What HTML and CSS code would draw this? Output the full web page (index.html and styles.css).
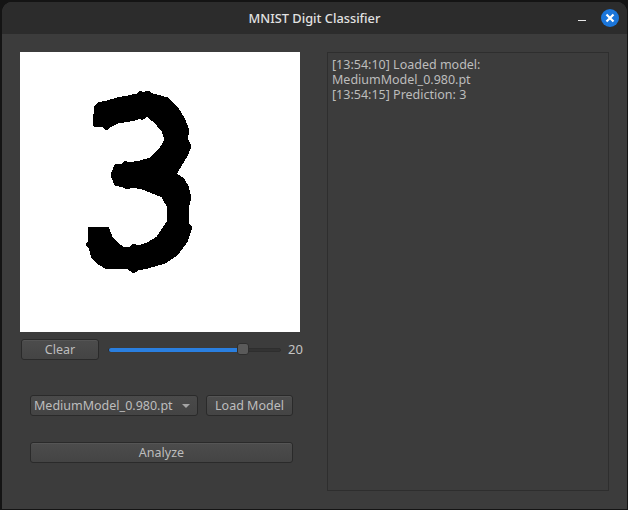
FILE: index.html
```html
<!DOCTYPE html>
<html lang="en">
<head>
    <meta charset="UTF-8">
    <meta name="viewport" content="width=device-width, initial-scale=1.0">
    <title>MNIST Digit Classifier</title>
    <link rel="stylesheet" href="styles.css">
</head>
<body>

    <div class="window">
        <div class="titlebar">
            <span class="title">MNIST Digit Classifier</span>
            <span class="minimize"></span>
            <span class="close">
                <svg width="10" height="10" viewBox="0 0 10 10">
                    <path d="M1.5 1.5 L8.5 8.5 M8.5 1.5 L1.5 8.5" stroke="#fff" stroke-width="2.2" fill="none"/>
                </svg>
            </span>
        </div>

        <div class="content">
            <div class="left">
                <div class="canvas">
                    <!-- hand drawn digit -->
                    <svg width="280" height="280" viewBox="20 52 280 280" shape-rendering="crispEdges">
                        <polygon fill="#000" stroke="#000" stroke-width="1" points="94,107 98,103 107,101 117,98 128,96 137,94 140,91 143,93 148,91 153,94 168,98 178,108 185,120 189,131 187,138 191,146 187,156 178,171 176,174 183,178 188,186 191,198 189,205 188,223 192,227 187,242 177,255 165,263 148,268 138,270 134,273 128,269 105,268 97,263 92,258 89,248 86,244 88,242 88,227 108,227 112,237 120,245 125,248 130,247 134,244 138,246 147,243 157,237 167,222 168,208 162,197 150,192 142,189 133,187 127,189 123,187 115,185 111,175 115,165 122,164 125,161 128,163 140,161 150,158 160,148 165,140 162,131 155,123 147,116 142,120 140,118 135,120 130,121 118,123 110,127 107,130 103,127 94,126 93,116 94,114"/>
                    </svg>
                </div>

                <div class="brush-row">
                    <button class="btn clear-btn">Clear</button>
                    <div class="slider">
                        <div class="slider-fill"></div>
                        <div class="slider-thumb"></div>
                    </div>
                    <span class="brush-size">20</span>
                </div>

                <div class="model-row">
                    <div class="combo">
                        <span>MediumModel_0.980.pt</span>
                        <span class="combo-arrow"></span>
                    </div>
                    <button class="btn load-btn">Load Model</button>
                </div>

                <button class="btn analyze-btn">Analyze</button>
            </div>

            <div class="log">[13:54:10] Loaded model:<br>MediumModel_0.980.pt<br>[13:54:15] Prediction: 3</div>
        </div>
    </div>

</body>
</html>
```

FILE: styles.css
```css
* {
    box-sizing: border-box;
}
body {
    margin: 0;
    height: 510px;
    padding: 2px 1px 1px 2px;
    background: #141414;
    overflow: hidden;
    font-family: "Noto Sans", sans-serif;
    font-size: 12.5px;
    color: #c4c4c4;
}
.window {
    height: 100%;
    display: flex;
    flex-direction: column;
    background: #3c3c3c;
    border-radius: 10px 10px 0 0;
    overflow: hidden;
}
.titlebar {
    position: relative;
    height: 32px;
    flex: none;
    display: flex;
    align-items: center;
    justify-content: center;
    background: #2c2c2c;
}
.title {
    font-size: 12.8px;
    font-weight: 500;
    color: #e2e2e2;
}
.minimize {
    position: absolute;
    left: 576px;
    top: 18px;
    width: 8px;
    height: 1px;
    background: #e8e8e8;
}
.close {
    position: absolute;
    left: 599px;
    top: 7px;
    width: 18px;
    height: 18px;
    border-radius: 50%;
    background: #1b76db;
    display: flex;
    align-items: center;
    justify-content: center;
}
.content {
    flex: 1;
    display: flex;
    padding-top: 18px;
}
.left {
    width: 325px;
    flex: none;
    padding-left: 18px;
}
.canvas {
    width: 280px;
    height: 280px;
    background: #fff;
}
.canvas svg {
    display: block;
}
.btn {
    height: 21px;
    padding: 0 0 1px;
    border: 1px solid #2a2a2a;
    border-radius: 3px;
    background: linear-gradient(#4c4c4c, #444);
    box-shadow: inset 0 1px 0 #555;
    font-family: inherit;
    font-size: 12.5px;
    color: #bdbdbd;
}
.brush-row {
    display: flex;
    align-items: center;
    margin: 7px 0 0 1px;
}
.clear-btn {
    width: 78px;
}
.slider {
    position: relative;
    width: 173px;
    height: 4px;
    margin-left: 9px;
    border: 1px solid #2e2e2e;
    border-radius: 2px;
    background: #333;
}
.slider-fill {
    width: 130px;
    height: 4px;
    margin-top: -1px;
    background: #2a7fe0;
    border-radius: 2px;
}
.slider-thumb {
    position: absolute;
    left: 128px;
    top: -6px;
    width: 12px;
    height: 12px;
    border: 1px solid #2e2e2e;
    border-radius: 3px;
    background: #5a5a5a;
}
.brush-size {
    margin: 0 0 2px 7px;
    font-size: 13px;
}
.model-row {
    display: flex;
    gap: 8px;
    margin: 35px 0 0 10px;
}
.combo {
    width: 168px;
    height: 21px;
    display: flex;
    align-items: center;
    justify-content: space-between;
    padding: 0 7px 1px 3px;
    border: 1px solid #2a2a2a;
    border-radius: 3px;
    background: linear-gradient(#4a4a4a, #444);
    color: #bdbdbd;
}
.combo-arrow {
    width: 0;
    height: 0;
    margin-top: 1px;
    border-left: 4px solid transparent;
    border-right: 4px solid transparent;
    border-top: 4px solid #a4a4a4;
}
.load-btn {
    width: 87px;
}
.analyze-btn {
    display: block;
    width: 263px;
    margin: 26px 0 0 10px;
}
.log {
    width: 282px;
    height: 439px;
    padding: 4px;
    border: 1px solid #2e2e2e;
    background: #3c3c3c;
    line-height: 15px;
    color: #bdbdbd;
}
```
